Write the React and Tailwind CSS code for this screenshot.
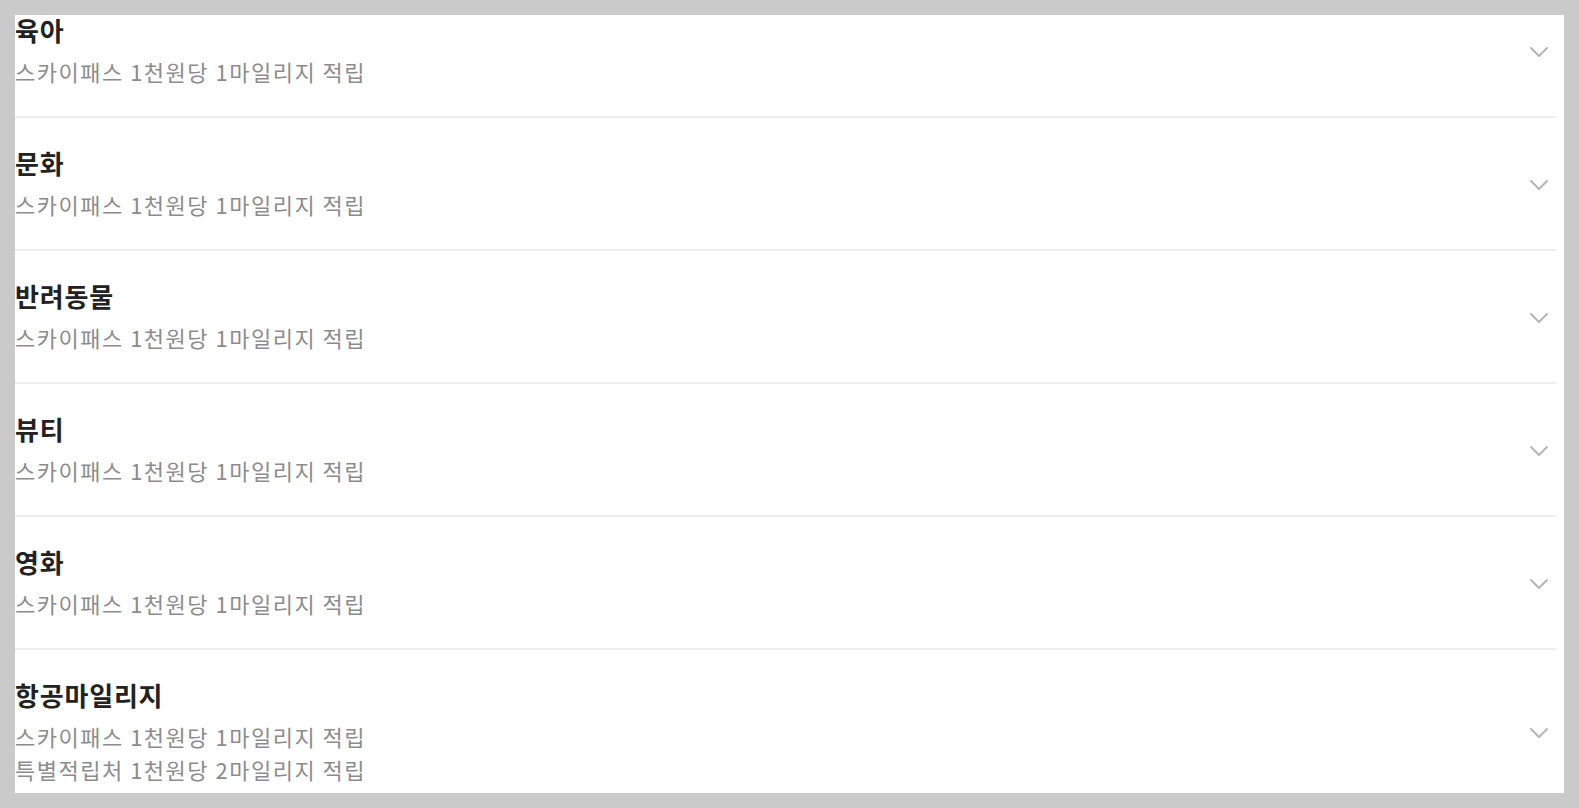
import React from 'react';

const items = [
  { title: '육아', lines: ['스카이패스 1천원당 1마일리지 적립'] },
  { title: '문화', lines: ['스카이패스 1천원당 1마일리지 적립'] },
  { title: '반려동물', lines: ['스카이패스 1천원당 1마일리지 적립'] },
  { title: '뷰티', lines: ['스카이패스 1천원당 1마일리지 적립'] },
  { title: '영화', lines: ['스카이패스 1천원당 1마일리지 적립'] },
  {
    title: '항공마일리지',
    lines: ['스카이패스 1천원당 1마일리지 적립', '특별적립처 1천원당 2마일리지 적립'],
  },
];

const Chevron = () => (
  <svg width="20" height="12" viewBox="0 0 20 12" fill="none" className="mt-[3px]">
    <polyline
      points="2,2 10,10 18,2"
      stroke="#b5b5b5"
      strokeWidth="2"
      strokeLinecap="round"
      strokeLinejoin="round"
    />
  </svg>
);

export default function App() {
  return (
    <div
      className="h-[808px] bg-[#cacaca] p-[15px]"
      style={{ fontFamily: '"Noto Sans CJK KR", "Noto Sans", sans-serif' }}
    >
      <div className="h-full bg-white overflow-hidden">
        {/* list is scrolled a bit, so the first row is cut at the top */}
        <ul className="-mt-[30px] mr-2">
          {items.map((item) => (
            <li
              key={item.title}
              className="flex items-center justify-between border-b-2 border-[#eceef2] pt-[27px] pb-[28px]"
            >
              <div>
                <h3 className="text-[26px] leading-[36px] tracking-[0.8px] font-bold text-[#222]">
                  {item.title}
                </h3>
                <div className="mt-[7px]">
                  {item.lines.map((line) => (
                    <p
                      key={line}
                      className="text-[22px] leading-[33px] tracking-[1.5px] text-[#8c8c8c]"
                    >
                      {line}
                    </p>
                  ))}
                </div>
              </div>
              <div className="pr-[7px]">
                <Chevron />
              </div>
            </li>
          ))}
        </ul>
      </div>
    </div>
  );
}
